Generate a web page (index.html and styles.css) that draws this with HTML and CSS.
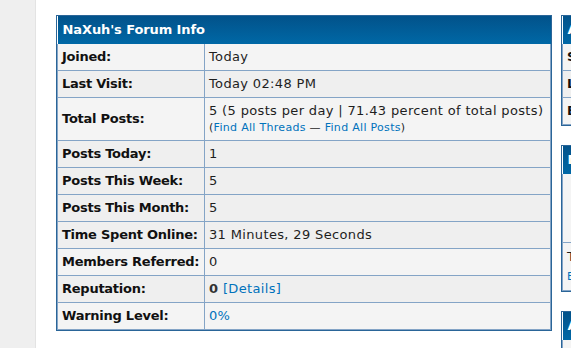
FILE: index.html
```html
<!DOCTYPE html>
<html lang="en">
<head>
  <meta charset="UTF-8" />
  <title>Profile of NaXuh</title>
  <link rel="stylesheet" href="styles.css">
</head>
<body>
  <div class="page">
    <div class="gutter"></div>
    <div class="content">
      <div class="tborder main-box">
        <table>
          <tr><th colspan="2" class="thead">NaXuh's Forum Info</th></tr>
          <tr class="trow1"><td class="label">Joined:</td><td>Today</td></tr>
          <tr class="trow2"><td class="label">Last Visit:</td><td>Today 02:48 PM</td></tr>
          <tr class="trow1">
            <td class="label">Total Posts:</td>
            <td>5 (5 posts per day | 71.43 percent of total posts)
              <span class="smalltext">(<a href="#">Find All Threads</a> &mdash; <a href="#">Find All Posts</a>)</span></td>
          </tr>
          <tr class="trow2"><td class="label">Posts Today:</td><td>1</td></tr>
          <tr class="trow2"><td class="label">Posts This Week:</td><td>5</td></tr>
          <tr class="trow2"><td class="label">Posts This Month:</td><td>5</td></tr>
          <tr class="trow2"><td class="label">Time Spent Online:</td><td>31 Minutes, 29 Seconds</td></tr>
          <tr class="trow1"><td class="label">Members Referred:</td><td>0</td></tr>
          <tr class="trow2"><td class="label">Reputation:</td><td><strong class="rep">0</strong> <a href="#">[Details]</a></td></tr>
          <tr class="trow1"><td class="label">Warning Level:</td><td><a href="#">0%</a></td></tr>
        </table>
      </div>

      <div class="side">
        <div class="tborder">
          <table>
            <tr><th class="thead">Additional Info About NaXuh</th></tr>
            <tr class="trow1"><td class="label">Sex:</td></tr>
            <tr class="trow2"><td class="label">Location:</td></tr>
            <tr class="trow1"><td class="label">Bio:</td></tr>
          </table>
        </div>
        <div class="tborder">
          <table>
            <tr><th class="thead">NaXuh's Avatar</th></tr>
            <tr class="trow1"><td class="avatar-cell"></td></tr>
            <tr class="trow1"><td class="note">This member has no avatar<br><a href="#" class="smalltext">Edit avatar</a></td></tr>
          </table>
        </div>
        <div class="tborder">
          <table>
            <tr><th class="thead">Administrative Options</th></tr>
            <tr class="trow1"><td>&nbsp;</td></tr>
          </table>
        </div>
      </div>
    </div>
  </div>
</body>
</html>
```

FILE: styles.css
```css
/* Page frame */
body {
  margin: 0;
  background: #efefef;
  font-family: "DejaVu Sans", Verdana, sans-serif;
  font-size: 13px;
  color: #1e1e1e;
  overflow: hidden;
}

a {
  color: #0072bc;
  text-decoration: none;
}

.page {
  display: flex;
  min-height: 348px;
}

.gutter {
  width: 35px;
  flex: none;
}

.content {
  flex: 1;
  display: flex;
  align-items: flex-start;
  gap: 9px;
  background: #fff;
  border-left: 1px solid #e3e3e3;
  padding: 15px 0 0 20px;
  min-width: 0;
}

/* Table boxes */
.tborder {
  border: 1px solid #2a6598;
  background: #fff;
}

.tborder table {
  border-collapse: collapse;
  width: 100%;
}

.main-box {
  width: 494px;
  flex: none;
}

.thead {
  background: linear-gradient(#02528a, #0068a6);
  color: #fff;
  font-weight: bold;
  text-align: left;
  padding: 5px 5px;
  height: 18px;
  line-height: 18px;
  letter-spacing: -0.1px;
  white-space: nowrap;
}

td {
  border: 1px solid #84a4c6;
  padding: 4px;
  line-height: 18px;
  letter-spacing: 0.35px;
  vertical-align: middle;
}

tr:first-child + tr td {
  border-top: none;
}

.trow1 td {
  background: #f4f4f4;
}

.trow2 td {
  background: #efefef;
}

.label {
  font-weight: bold;
  color: #111;
  width: 138px;
  letter-spacing: -0.25px;
  white-space: nowrap;
}

.smalltext {
  display: block;
  font-size: 11px;
  line-height: 16px;
  letter-spacing: 0.3px;
}

.rep {
  color: #333;
}

/* Right column */
.side {
  width: 220px;
  flex: none;
  display: flex;
  flex-direction: column;
  gap: 19px;
}

.side td {
  white-space: nowrap;
}

.avatar-cell {
  height: 60px;
}

.note {
  line-height: 19px;
}

.note .smalltext {
  display: inline;
  line-height: 19px;
}
```
